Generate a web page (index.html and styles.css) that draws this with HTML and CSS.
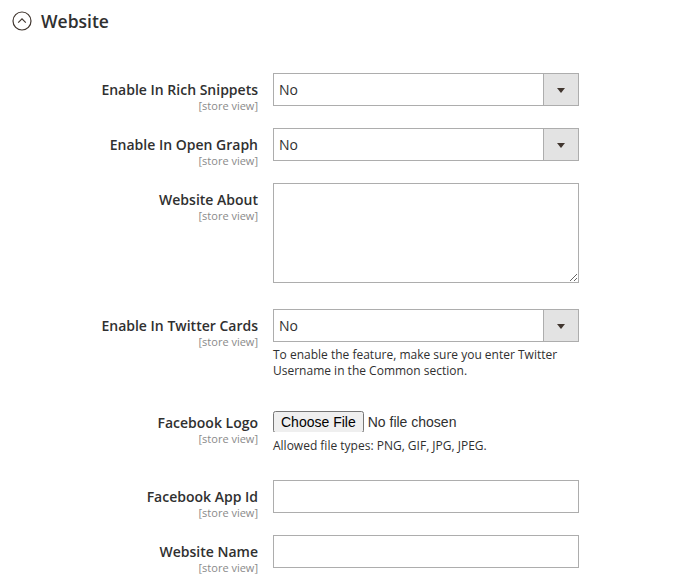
FILE: index.html
```html
<!DOCTYPE html>
<html lang="en">
<head>
    <meta charset="UTF-8">
    <meta name="viewport" content="width=device-width, initial-scale=1.0">
    <title>Website</title>
    <link rel="stylesheet" href="styles.css">
</head>
<body>
    <div class="section">
        <div class="section-title">
            <span class="toggle">
                <svg width="20" height="20" viewBox="0 0 20 20">
                    <circle cx="10" cy="10" r="9" fill="none" stroke="#41362f" stroke-width="1.2"/>
                    <path d="M6.2 11.6 L10 7.9 L13.8 11.6" fill="none" stroke="#41362f" stroke-width="1.2"/>
                </svg>
            </span>
            <span>Website</span>
        </div>

        <div class="fields">
            <div class="row">
                <div class="label">
                    <span class="name">Enable In Rich Snippets</span>
                    <span class="scope">[store view]</span>
                </div>
                <div class="control">
                    <div class="select-wrap">
                        <select><option>No</option><option>Yes</option></select>
                    </div>
                </div>
            </div>

            <div class="row">
                <div class="label">
                    <span class="name">Enable In Open Graph</span>
                    <span class="scope">[store view]</span>
                </div>
                <div class="control">
                    <div class="select-wrap">
                        <select><option>No</option><option>Yes</option></select>
                    </div>
                </div>
            </div>

            <div class="row row-text">
                <div class="label">
                    <span class="name">Website About</span>
                    <span class="scope">[store view]</span>
                </div>
                <div class="control">
                    <textarea></textarea>
                </div>
            </div>

            <div class="row row-note">
                <div class="label">
                    <span class="name">Enable In Twitter Cards</span>
                    <span class="scope">[store view]</span>
                </div>
                <div class="control">
                    <div class="select-wrap">
                        <select><option>No</option><option>Yes</option></select>
                    </div>
                    <p class="note">To enable the feature, make sure you enter Twitter Username in the Common section.</p>
                </div>
            </div>

            <div class="row row-file">
                <div class="label">
                    <span class="name">Facebook Logo</span>
                    <span class="scope">[store view]</span>
                </div>
                <div class="control">
                    <input type="file">
                    <p class="note">Allowed file types: PNG, GIF, JPG, JPEG.</p>
                </div>
            </div>

            <div class="row">
                <div class="label">
                    <span class="name">Facebook App Id</span>
                    <span class="scope">[store view]</span>
                </div>
                <div class="control">
                    <input type="text">
                </div>
            </div>

            <div class="row">
                <div class="label">
                    <span class="name">Website Name</span>
                    <span class="scope">[store view]</span>
                </div>
                <div class="control">
                    <input type="text">
                </div>
            </div>
        </div>
    </div>
</body>
</html>
```

FILE: styles.css
```css
* {
    box-sizing: border-box;
    margin: 0;
    padding: 0;
}

body {
    font-family: "Open Sans", "Liberation Sans", sans-serif;
    background-color: #fff;
    color: #303030;
}

.section-title {
    display: flex;
    align-items: center;
    gap: 9px;
    padding: 11px 0 0 12px;
    font-size: 17.5px;
    font-weight: 600;
    line-height: 20px;
    color: #303030;
}

.toggle svg {
    display: block;
}

.fields {
    margin-top: 42px;
}

.row {
    display: grid;
    grid-template-columns: 258px 306px;
    column-gap: 15px;
    margin-bottom: 16px;
}

.row-text {
    margin-bottom: 26px;
}

.row-note {
    margin-bottom: 27px;
}

.row-file {
    margin-bottom: 26px;
}

.label {
    display: flex;
    flex-direction: column;
    align-items: flex-end;
    padding-top: 7px;
    text-align: right;
}

.label .name {
    font-size: 14px;
    font-weight: 600;
    line-height: 19px;
    color: #303030;
}

.label .scope {
    font-size: 11px;
    line-height: 13px;
    color: #8a8a8a;
}

.select-wrap {
    position: relative;
    height: 33px;
}

.select-wrap select {
    appearance: none;
    -webkit-appearance: none;
    width: 100%;
    height: 33px;
    border: 1px solid #adadad;
    border-radius: 0;
    background-color: #fff;
    padding: 0 40px 0 5px;
    font-family: "Open Sans", "Liberation Sans", sans-serif;
    font-size: 14px;
    color: #303030;
}

/* arrow box sits over the select's right edge */
.select-wrap::after {
    content: "";
    position: absolute;
    top: 1px;
    right: 1px;
    width: 34px;
    height: 31px;
    border-left: 1px solid #adadad;
    background: #e3e3e3;
    pointer-events: none;
}

.select-wrap::before {
    content: "";
    position: absolute;
    z-index: 1;
    top: 15px;
    right: 14px;
    border-left: 4px solid transparent;
    border-right: 4px solid transparent;
    border-top: 5px solid #41362f;
    pointer-events: none;
}

textarea {
    display: block;
    width: 306px;
    height: 100px;
    border: 1px solid #adadad;
    border-radius: 0;
    font-family: "Open Sans", "Liberation Sans", sans-serif;
    font-size: 14px;
}

input[type="text"] {
    display: block;
    width: 306px;
    height: 33px;
    border: 1px solid #adadad;
    border-radius: 0;
    padding: 0 5px;
    font-family: "Open Sans", "Liberation Sans", sans-serif;
    font-size: 14px;
}

.row-file .control {
    padding-top: 5px;
}

input[type="file"] {
    display: block;
    height: 21px;
    font-family: "Liberation Sans", Arial, sans-serif;
    font-size: 14px;
    color: #303030;
}

.note {
    margin-top: 5px;
    font-size: 12px;
    line-height: 16px;
    color: #303030;
}

.row-file .note {
    margin-top: 6px;
}
```
